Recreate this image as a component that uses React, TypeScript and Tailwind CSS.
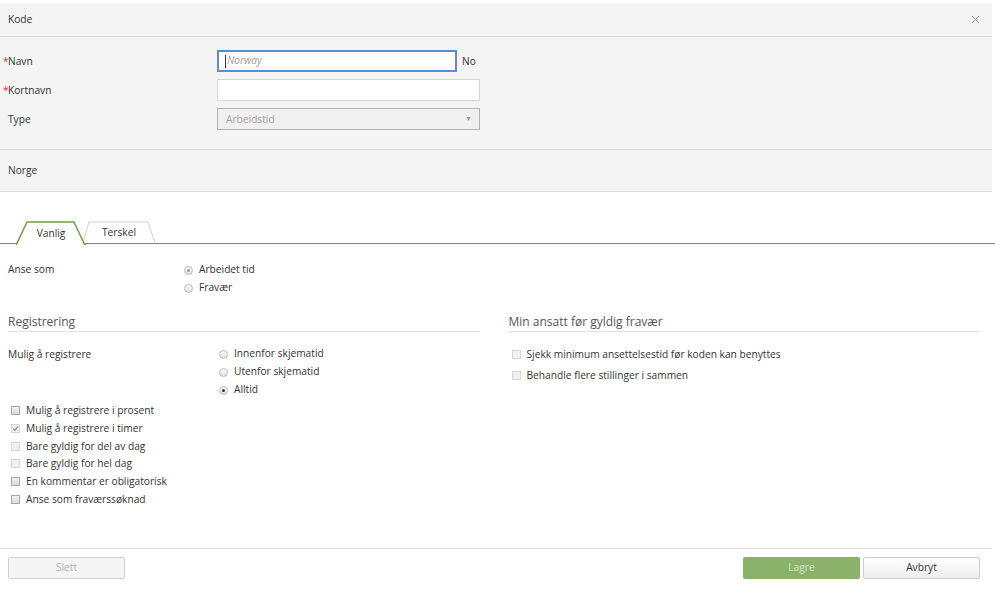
const font = { fontFamily: '"Open Sans", "Liberation Sans", sans-serif' };

function Radio({ checked, dim }: { checked?: boolean; dim?: boolean }) {
  return (
    <span className="w-[9px] h-[9px] rounded-full border border-[#b9b9b9] bg-gradient-to-b from-[#fafafa] to-[#e2e2e2] flex items-center justify-center shrink-0">
      {checked && <span className={`w-[3px] h-[3px] rounded-full ${dim ? "bg-[#9a9a9a]" : "bg-[#333]"}`} />}
    </span>
  );
}

function Check({ checked, dim }: { checked?: boolean; dim?: boolean }) {
  return (
    <span
      className={`w-[9px] h-[9px] border flex items-center justify-center shrink-0 ${
        dim ? "border-[#d6d6d6] bg-[#f0f0f0]" : "border-[#a9a9a9] bg-gradient-to-b from-[#f2f2f2] to-[#d9d9d9]"
      }`}
    >
      {checked && (
        <svg width="7" height="7" viewBox="0 0 7 7">
          <path d="M1 3.6 L2.8 5.3 L6 1.4" fill="none" stroke="#8a8a8a" strokeWidth="1.2" />
        </svg>
      )}
    </span>
  );
}

const LEFT_CHECKS = [
  { label: "Mulig å registrere i prosent" },
  { label: "Mulig å registrere i timer", checked: true, dim: true },
  { label: "Bare gyldig for del av dag", dim: true },
  { label: "Bare gyldig for hel dag", dim: true },
  { label: "En kommentar er obligatorisk" },
  { label: "Anse som fraværssøknad" },
];

const RIGHT_CHECKS = ["Sjekk minimum ansettelsestid før koden kan benyttes", "Behandle flere stillinger i sammen"];

export default function App() {
  return (
    <div className="w-[995px] h-[592px] bg-white text-[10.2px] text-[#333] overflow-hidden" style={font}>
      <div className="h-[3px]" />

      {/* Header */}
      <div className="w-[992px] h-[34px] bg-[#f4f4f4] border-b border-[#dcdcdc] flex items-center justify-between pl-[8px] pr-[12px]">
        <span className="text-[#333] pt-px">Kode</span>
        <svg width="9" height="9" viewBox="0 0 9 9">
          <path d="M1 1 L8 8 M8 1 L1 8" stroke="#8c8c8c" strokeWidth="1" />
        </svg>
      </div>

      {/* Form */}
      <div className="w-[992px] bg-[#f4f4f4] border-b border-[#dcdcdc] pt-[13px] pb-[19px] flex flex-col gap-[7px]">
        <div className="flex items-center h-[22px]">
          <div className="w-[217px] pl-[3px] pt-px flex">
            <span className="text-[#d33] w-[5px]">*</span>
            <span>Navn</span>
          </div>
          <div className="w-[240px] h-[22px] border-2 border-[#5a8dcc] bg-white flex items-center pl-[6px]">
            <span className="w-px h-[13px] bg-[#333]" />
            <span className="italic text-[#a0a0a0] ml-[1px]">Norway</span>
          </div>
          <span className="ml-[5px] pt-px">No</span>
        </div>
        <div className="flex items-center h-[22px]">
          <div className="w-[217px] pl-[3px] pt-px flex">
            <span className="text-[#d33] w-[5px]">*</span>
            <span>Kortnavn</span>
          </div>
          <div className="w-[263px] h-[22px] border border-[#d6d6d6] bg-white" />
        </div>
        <div className="flex items-center h-[22px]">
          <div className="w-[217px] pl-[8px] pt-px">Type</div>
          <div className="w-[263px] h-[22px] border border-[#b3b3b3] bg-[#f0f0f0] flex items-center justify-between pl-[8px] pr-[7px]">
            <span className="text-[#a3a3a3] pt-px">Arbeidstid</span>
            <span className="text-[7px] text-[#999]">▼</span>
          </div>
        </div>
      </div>

      {/* Norge */}
      <div className="w-[992px] h-[42px] bg-[#f4f4f4] border-b border-[#dcdcdc] flex items-center pl-[8px] pt-px">
        Norge
      </div>

      {/* Tabs */}
      <div className="mt-[28px] h-[24px] border-b-[1.5px] border-[#6e9f45] flex items-end pl-[16px]">
        <div className="relative z-10 w-[70px] h-[24px] -mb-[1.5px] flex items-center justify-center pt-[3px]">
          <svg className="absolute inset-0" width="70" height="24" viewBox="0 0 70 24">
            <path d="M0 24 L11 1 L58 1 L70 24 Z" fill="#fff" />
            <path d="M-1 23.2 L0.5 23.2 L11 1 L58 1 L68.5 23.2 L71 23.2" fill="none" stroke="#6e9f45" strokeWidth="1.5" />
          </svg>
          <span className="relative">Vanlig</span>
        </div>
        <div className="relative -ml-[3px] w-[72px] h-[22px] flex items-center justify-center pt-[2px]">
          <svg className="absolute inset-0" width="72" height="22" viewBox="0 0 72 22">
            <path d="M0 22 L6 1 L65 1 L72 22" fill="#fff" stroke="#cfcfcf" strokeWidth="1" />
          </svg>
          <span className="relative">Terskel</span>
        </div>
      </div>

      {/* Anse som */}
      <div className="flex pt-[17px]">
        <div className="w-[184px] pl-[8px] h-[18px] flex items-center">Anse som</div>
        <div className="flex flex-col">
          <div className="h-[18px] flex items-center gap-[6px]">
            <Radio checked dim />
            <span>Arbeidet tid</span>
          </div>
          <div className="h-[18px] flex items-center gap-[6px]">
            <Radio />
            <span>Fravær</span>
          </div>
        </div>
      </div>

      {/* Two columns */}
      <div className="grid grid-cols-2 gap-[29px] pl-[8px] pr-[15px] mt-[15px]">
        <div>
          <div className="h-[20px] border-b border-[#e2e2e2] text-[12px] text-[#555] flex items-center">Registrering</div>
          <div className="flex mt-[13px]">
            <div className="w-[211px] h-[18px] flex items-center pt-px">Mulig å registrere</div>
            <div className="flex flex-col">
              {["Innenfor skjematid", "Utenfor skjematid", "Alltid"].map((t) => (
                <div key={t} className="h-[18px] flex items-center gap-[6px]">
                  <Radio checked={t === "Alltid"} />
                  <span>{t}</span>
                </div>
              ))}
            </div>
          </div>
          <div className="flex flex-col mt-[3px] pl-[3px]">
            {LEFT_CHECKS.map((c) => (
              <div key={c.label} className="h-[17.7px] flex items-center gap-[6px]">
                <Check checked={c.checked} dim={c.dim} />
                <span>{c.label}</span>
              </div>
            ))}
          </div>
        </div>
        <div>
          <div className="h-[20px] border-b border-[#e2e2e2] text-[12px] text-[#555] flex items-center">
            Min ansatt før gyldig fravær
          </div>
          <div className="flex flex-col mt-[12px] pl-[3px]">
            {RIGHT_CHECKS.map((t) => (
              <div key={t} className="h-[21px] flex items-center gap-[6px]">
                <Check dim />
                <span>{t}</span>
              </div>
            ))}
          </div>
        </div>
      </div>

      {/* Footer */}
      <div className="mt-[40px] border-t border-[#e4e4e4] w-[992px] pt-[8px] flex items-center justify-between pl-[8px] pr-[12px]">
        <button className="w-[117px] h-[22px] border border-[#d0d0d0] bg-[#f5f5f5] text-[#b0b0b0] rounded-[2px]">Slett</button>
        <div className="flex gap-[3px]">
          <button className="w-[117px] h-[22px] bg-[#8bb26a] text-[#d8e9c8] rounded-[2px]">Lagre</button>
          <button className="w-[117px] h-[22px] border border-[#cfcfcf] bg-gradient-to-b from-white to-[#ededed] text-[#333] rounded-[2px]">
            Avbryt
          </button>
        </div>
      </div>
    </div>
  );
}
